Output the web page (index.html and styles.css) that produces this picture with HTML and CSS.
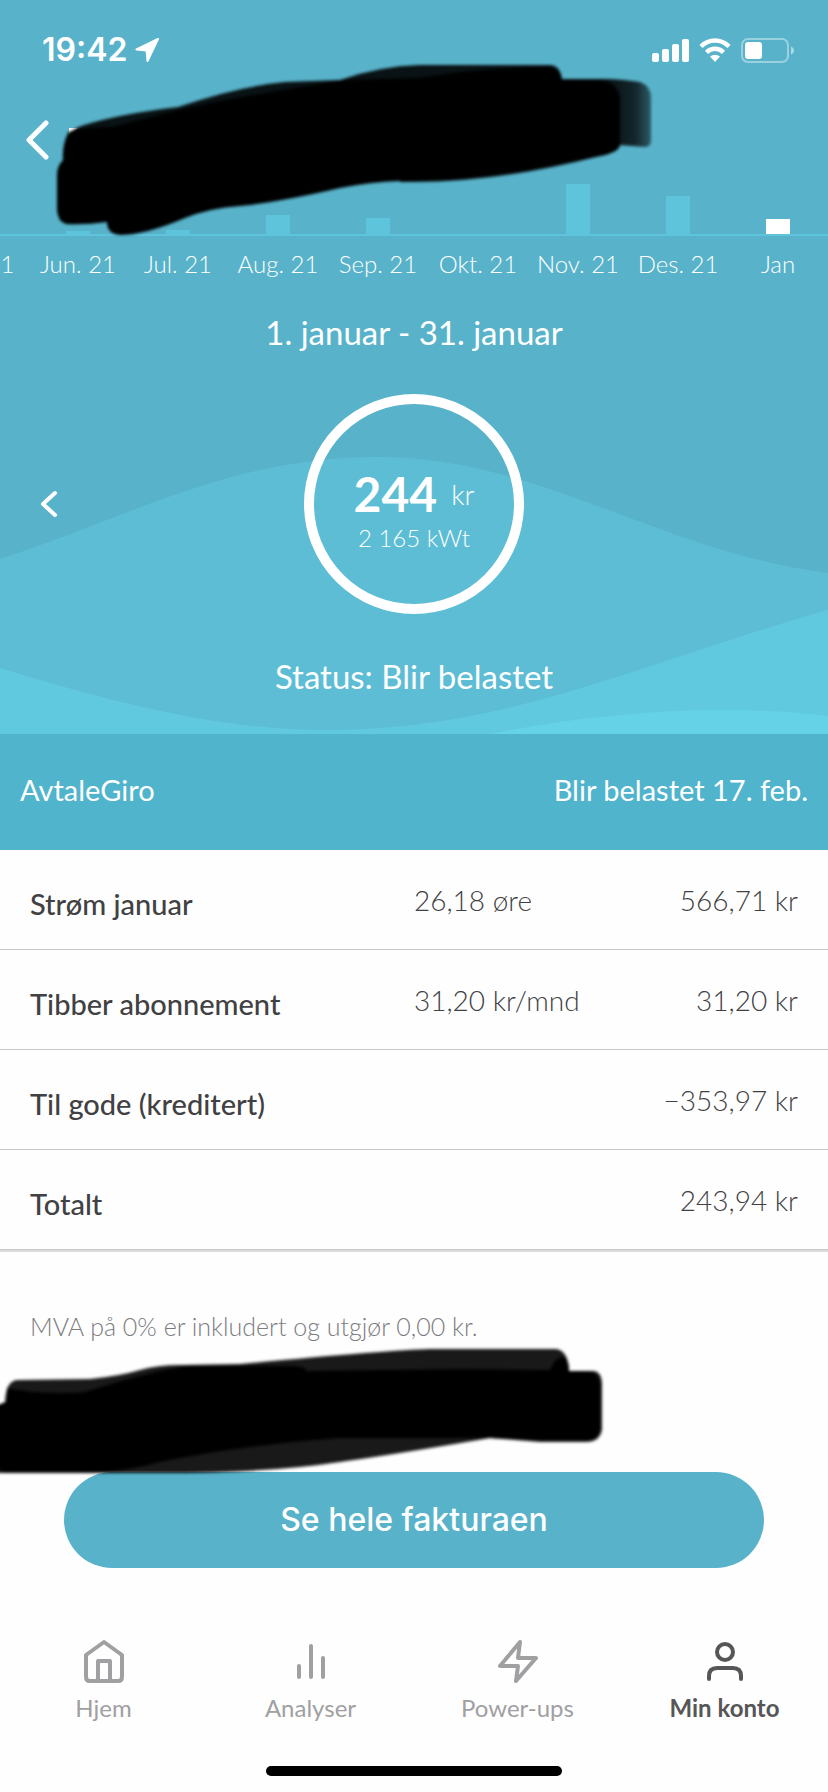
FILE: index.html
```html
<!DOCTYPE html>
<html lang="nb">
<head>
<meta charset="utf-8">
<meta name="viewport" content="width=device-width, initial-scale=1">
<title>Faktura</title>
<link rel="stylesheet" href="styles.css">
</head>
<body>
<div class="app">
  <header class="hero">
    <svg class="waves" viewBox="0 0 828 734" preserveAspectRatio="none" aria-hidden="true">
      <path fill="#5dbdd4" d="M0 559C130 517 230 457 378 457C540 457 660 552 828 573V734H0Z"/>
      <path fill="#61c9df" d="M0 668C110 702 220 730 325 730C510 730 640 663 828 610V734H0Z"/>
      <path fill="#65d2e8" d="M490 734C570 718 650 710 720 710C760 710 795 712 828 716V734Z"/>
    </svg>

    <div class="statusbar">
      <div class="clock">
        <span>19:42</span>
        <svg width="24" height="24" viewBox="0 0 24 24" aria-hidden="true"><path fill="#fff" stroke="#fff" stroke-width="2" stroke-linejoin="round" d="M23 1L1.500 11.500L11.500 12.500L12.500 23Z"/></svg>
      </div>
      <div class="indicators">
        <svg width="37" height="24" viewBox="0 0 37 24" fill="#fff" aria-hidden="true"><rect y="15" width="7" height="9" rx="2"/><rect x="10" y="11" width="7" height="13" rx="2"/><rect x="20" y="6" width="7" height="18" rx="2"/><rect x="30" y="1" width="7" height="23" rx="2"/></svg>
        <svg width="32" height="24" viewBox="0 0 32 24" fill="none" stroke="#fff" stroke-width="4.500" aria-hidden="true"><path d="M2 8.500C10 .6 22 .6 30 8.500"/><path d="M7.500 14.300C12.500 9.600 19.500 9.600 24.500 14.300"/><path fill="#fff" stroke="none" d="M11 18.500Q16 14.800 21 18.500L16 24Z"/></svg>
        <svg width="53" height="25" viewBox="0 0 53 25" aria-hidden="true"><rect x="1" y="1" width="46" height="23" rx="6" fill="none" stroke="#fff" stroke-opacity=".4" stroke-width="2"/><rect x="4" y="4" width="17" height="17" rx="3" fill="#fff"/><path fill="#fff" fill-opacity=".5" d="M50 8.500C54 10 54 15 50 16.500Z"/></svg>
      </div>
    </div>

    <div class="topbar">
      <button class="icon-button" aria-label="Tilbake">
        <svg width="24" height="40" viewBox="0 0 24 40" fill="none" stroke="#fff" stroke-width="5" stroke-linecap="round" stroke-linejoin="round"><path d="M20 3L3 20L20 37"/></svg>
      </button>
    </div>

    <div class="chart">
      <div class="bars">
        <span></span>
        <span class="bar" style="height:3px"></span>
        <span class="bar" style="height:4px"></span>
        <span class="bar" style="height:19px"></span>
        <span class="bar" style="height:16px"></span>
        <span></span>
        <span class="bar" style="height:50px"></span>
        <span class="bar" style="height:38px"></span>
        <span class="bar bar-active" style="height:15px"></span>
      </div>
      <div class="months">
        <span>Mai 21</span><span>Jun. 21</span><span>Jul. 21</span><span>Aug. 21</span><span>Sep. 21</span><span>Okt. 21</span><span>Nov. 21</span><span>Des. 21</span><span>Jan</span>
      </div>
    </div>

    <h1 class="period">1. januar - 31. januar</h1>
    <div class="summary">
      <button class="icon-button" aria-label="Forrige måned">
        <svg width="18" height="28" viewBox="0 0 18 28" fill="none" stroke="#fff" stroke-width="4" stroke-linecap="round" stroke-linejoin="round"><path d="M15 3L3 14L15 25"/></svg>
      </button>
      <div class="ring">
        <div class="amount"><strong>244</strong><span>kr</span></div>
        <div class="usage">2 165 kWt</div>
      </div>
    </div>
    <p class="status">Status: Blir belastet</p>

    <svg class="marker marker-top" width="620" height="190" viewBox="44 56 620 190" aria-hidden="true">
      <defs>
        <filter id="soft" x="-5%" y="-10%" width="110%" height="120%"><feGaussianBlur stdDeviation="1.500"/></filter>
        <linearGradient id="fade" gradientUnits="userSpaceOnUse" x1="610" y1="0" x2="653" y2="0"><stop offset="0" stop-opacity=".9"/><stop offset=".6" stop-opacity=".78"/><stop offset="1" stop-opacity=".45"/></linearGradient>
      </defs>
      <path fill="#fff" d="M69 128H78L69 136Z"/>
      <g filter="url(#soft)">
        <path fill="url(#fade)" d="M68 138Q70 129 84 125Q120 114 178 107Q240 86 285 82L340 80Q380 66 420 65H550Q560 65 562 79H605Q620 79 640 82Q651 86 651 98V138Q652 147 645 147L620 145Q620 152 600 156Q500 182 414 182H400V150H68Z"/>
        <path d="M68 133Q72 128 112 127Q170 112 210 103Q280 90 344 80L420 78Q480 68 550 67Q560 70 562 80H600Q620 84 620 100V143Q620 152 600 156Q565 162 540 168Q470 181 400 181Q370 182 340 188Q280 202 240 206Q210 208 185 218Q145 235 120 235Q107 234 107 222Q85 225 66 224Q58 222 57 210V175Q57 166 63 160Q62 145 68 133Z"/>
      </g>
    </svg>
  </header>

  <section class="payment">
    <span>AvtaleGiro</span>
    <span>Blir belastet 17. feb.</span>
  </section>

  <main>
    <table class="lines">
      <tbody>
        <tr><th scope="row">Strøm januar</th><td>26,18 øre</td><td class="sum">566,71 kr</td></tr>
        <tr><th scope="row">Tibber abonnement</th><td>31,20 kr/mnd</td><td class="sum">31,20 kr</td></tr>
        <tr><th scope="row">Til gode (kreditert)</th><td></td><td class="sum">−353,97 kr</td></tr>
        <tr><th scope="row">Totalt</th><td></td><td class="sum">243,94 kr</td></tr>
      </tbody>
    </table>
    <div class="notes">
      <p class="vat">MVA på 0% er inkludert og utgjør 0,00 kr.</p>
      <button class="invoice-button">Se hele fakturaen</button>
      <svg class="marker marker-notes" width="620" height="140" viewBox="0 1342 620 140" aria-hidden="true">
        <g filter="url(#soft)">
          <path opacity=".9" d="M-4 1406L5 1402Q6 1380 18 1380L90 1379Q120 1376 140 1370Q158 1365 180 1365L240 1364Q390 1350 430 1349H556Q566 1350 569 1366V1371H594Q602 1372 602 1385V1430Q600 1441 588 1442H540L490 1438Q350 1462 300 1467Q240 1473 160 1473H-4Z"/>
          <path d="M-4 1406L7 1402V1388Q40 1395 85 1392Q150 1371 190 1366H290Q306 1366 306 1371L460 1369L550 1370Q556 1354 566 1358L569 1371H590Q600 1374 600 1386V1430Q598 1440 586 1440H540L490 1438H340Q250 1444 160 1462Q125 1472 90 1472H12Q-4 1474 -4 1460Z"/>
        </g>
      </svg>
    </div>
  </main>

  <nav class="tabs">
    <a href="#hjem">
      <svg width="48" height="48" viewBox="0 0 48 48"><path d="M6 17L24 4L42 17V39Q42 43 38 43H10Q6 43 6 39ZM18 43V23H30V43"/></svg>
      <span>Hjem</span>
    </a>
    <a href="#analyser">
      <svg width="48" height="48" viewBox="0 0 48 48"><path d="M12 28V39M24 8V39M36 20V39"/></svg>
      <span>Analyser</span>
    </a>
    <a href="#power-ups">
      <svg width="48" height="48" viewBox="0 0 48 48"><path d="M26 4L6 28H24L22 43L42 20H24Z"/></svg>
      <span>Power-ups</span>
    </a>
    <a href="#konto" class="current" aria-current="page">
      <svg width="48" height="48" viewBox="0 0 48 48"><circle cx="24" cy="14" r="8"/><path d="M8 41V38Q8 30 16 30H32Q40 30 40 38V41"/></svg>
      <span>Min konto</span>
    </a>
  </nav>
  <div class="home-indicator"></div>
</div>
</body>
</html>
```
FILE: styles.css
```css
* { box-sizing: border-box; }

body {
  margin: 0;
  background: #fefefe;
  color: #414143;
  font-family: Lato, "Open Sans", sans-serif;
  font-size: 28px;
  line-height: 36px;
}

button {
  border: 0;
  background: none;
  font: inherit;
  color: inherit;
  cursor: pointer;
}

svg { display: block; }

.app {
  display: flex;
  flex-direction: column;
  min-height: 100vh;
  overflow: hidden;
}

.hero {
  position: relative;
  isolation: isolate;
  padding-bottom: 38px;
  background: #58b3ca;
  color: #fff;
}

.waves {
  position: absolute;
  inset: 0;
  z-index: -1;
  width: 100%;
  height: 100%;
}

.statusbar {
  display: flex;
  align-items: center;
  justify-content: space-between;
  padding: 32px 34px 0 42px;
}

.clock {
  display: flex;
  align-items: center;
  gap: 8px;
  font-family: Inter, sans-serif;
  font-size: 32px;
  font-weight: 600;
}

.indicators {
  display: flex;
  align-items: center;
  gap: 10px;
}

.topbar { padding: 52px 26px 0; }

.icon-button {
  display: block;
  padding: 0;
}

.chart { overflow: hidden; }

.bars,
.months {
  display: grid;
  grid-template-columns: repeat(9, 100px);
  justify-content: end;
}

.bars {
  align-items: end;
  justify-items: center;
  height: 76px;
  border-bottom: 2px solid #5ec4dc;
}

.bar {
  width: 24px;
  background: #5ec4dc;
}

.bar-active { background: #fff; }

.months {
  padding-top: 10px;
  font-size: 24px;
  font-weight: 300;
  text-align: center;
  white-space: nowrap;
}

.period,
.status {
  margin: 0;
  font-size: 33px;
  font-weight: 400;
  line-height: 40px;
  text-align: center;
}

.period { padding-top: 30px; }

.summary {
  display: grid;
  grid-template-columns: 1fr auto 1fr;
  align-items: center;
  padding: 42px 40px;
}

.ring {
  display: flex;
  flex-direction: column;
  align-items: center;
  justify-content: center;
  width: 220px;
  height: 220px;
  padding-top: 16px;
  border: 10px solid #fff;
  border-radius: 50%;
}

.amount {
  display: flex;
  align-items: center;
  gap: 14px;
  font-size: 28px;
  font-weight: 300;
}

.amount strong {
  font-size: 48px;
  font-weight: 700;
  line-height: 52px;
}

.usage {
  font-size: 24px;
  font-weight: 300;
}

.marker {
  position: absolute;
  pointer-events: none;
}

.marker-top {
  top: 56px;
  left: 44px;
}

.payment {
  display: flex;
  align-items: center;
  justify-content: space-between;
  min-height: 116px;
  padding: 0 20px 4px;
  background: #50b4cd;
  color: #fff;
  font-size: 29px;
}

.lines {
  width: 100%;
  border-collapse: separate;
  border-spacing: 0;
  border-bottom: 2px solid #dcdcde;
  table-layout: fixed;
}

.lines th,
.lines td {
  height: 100px;
  padding: 0;
  border-bottom: 1px solid #c6c6c8;
  font-weight: 300;
  text-align: left;
}

.lines th {
  width: 50%;
  padding: 8px 0 0 30px;
  font-size: 29px;
  font-weight: 500;
}

.lines .sum {
  padding-right: 30px;
  text-align: right;
}

.notes {
  position: relative;
  padding: 56px 64px 0;
}

.vat {
  margin: 0 -34px;
  color: #7c7c7e;
  font-size: 25px;
  font-weight: 300;
}

.marker-notes {
  top: 90px;
  left: 0;
}

.invoice-button {
  width: 100%;
  height: 96px;
  margin-top: 128px;
  border-radius: 48px;
  background: #58b3ca;
  color: #fff;
  font-family: Inter, sans-serif;
  font-size: 32px;
  font-weight: 500;
}

.tabs {
  display: grid;
  grid-template-columns: repeat(4, 1fr);
  padding-top: 70px;
}

.tabs a {
  display: flex;
  flex-direction: column;
  align-items: center;
  gap: 4px;
  color: #a0a0a2;
  font-size: 24px;
  text-decoration: none;
}

.tabs svg {
  fill: none;
  stroke: currentColor;
  stroke-width: 4;
  stroke-linecap: round;
  stroke-linejoin: round;
}

.tabs .current {
  color: #565658;
  font-weight: 700;
}

.home-indicator {
  width: 296px;
  height: 10px;
  margin: auto auto 16px;
  border-radius: 5px;
  background: #000;
}
```
